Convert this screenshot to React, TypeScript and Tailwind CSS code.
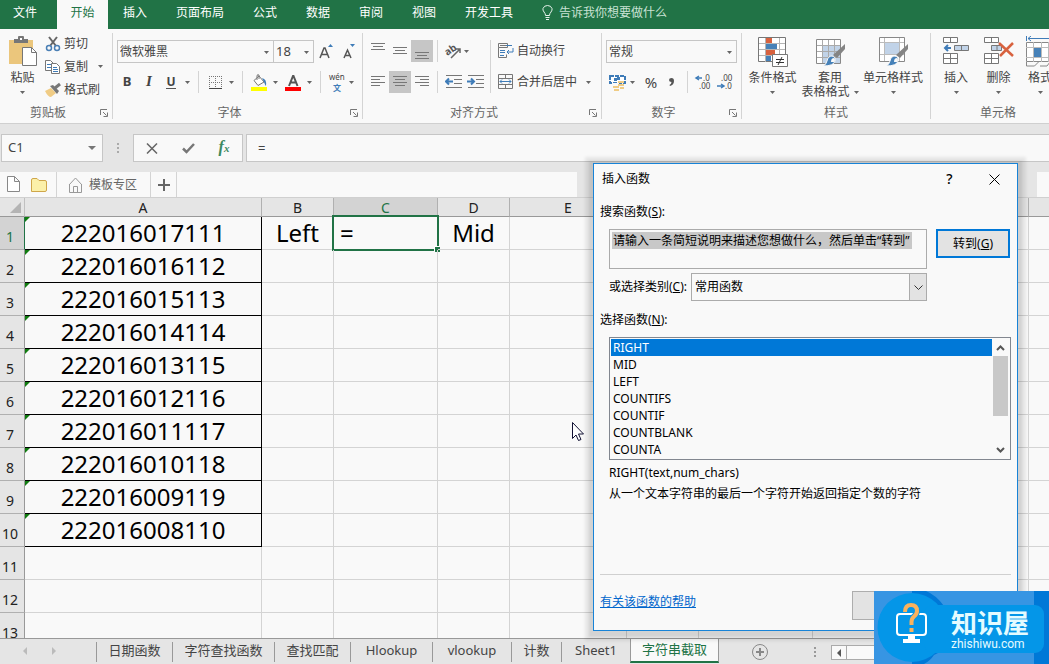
import type { ReactNode } from "react"
import clsx from "clsx"

const menuTabs = ["插入", "页面布局", "公式", "数据", "审阅", "视图", "开发工具"]

const columns = ["A", "B", "C", "D", "E", "F", "G", "H", "I"]

const values = [
  "222016017111",
  "222016016112",
  "222016015113",
  "222016014114",
  "222016013115",
  "222016012116",
  "222016011117",
  "222016010118",
  "222016009119",
  "222016008110",
]

const rows = Array.from({ length: 13 }, (_, i) => i + 1)

const sheets = [
  { name: "日期函数", width: "w-[76px]" },
  { name: "字符查找函数", width: "w-[102px]" },
  { name: "查找匹配", width: "w-[76px]" },
  { name: "Hlookup", width: "w-[82px]" },
  { name: "vlookup", width: "w-[79px]" },
  { name: "计数", width: "w-[50px]" },
  { name: "Sheet1", width: "w-[69px]" },
]

const functions = ["RIGHT", "MID", "LEFT", "COUNTIFS", "COUNTIF", "COUNTBLANK", "COUNTA"]

function Caret({ className }: { className?: string }) {
  return (
    <svg className={clsx("shrink-0", className)} width="5" height="3" viewBox="0 0 5 3" fill="#666">
      <path d="M0 0h5L2.5 3z" />
    </svg>
  )
}

function Separator({ className }: { className?: string }) {
  return <span className={clsx("w-px shrink-0 self-stretch bg-[#d4d4d4]", className)} />
}

function Group({
  label,
  launcher = true,
  className,
  children,
}: {
  label: string
  launcher?: boolean
  className?: string
  children: ReactNode
}) {
  return (
    <section
      aria-label={label}
      className={clsx("flex h-[86px] shrink-0 flex-col justify-between border-r border-[#d4d4d4]", className)}
    >
      {children}
      <div className="flex h-3 items-center">
        <span className="flex-1 text-center leading-3 text-[#666]">{label}</span>
        {launcher && (
          <button aria-label={`${label}设置`} className="mr-1 ml-1 h-2">
            <svg width="8" height="8" viewBox="0 0 8 8" fill="none" stroke="#777">
              <path d="M.5 6V.5H7M3 3l3.500 3.500M7.500 3.500v4h-4" />
            </svg>
          </button>
        )}
      </div>
    </section>
  )
}

function ToolButton({
  label,
  active,
  className = "w-[22px]",
  children,
}: {
  label: string
  active?: boolean
  className?: string
  children: ReactNode
}) {
  return (
    <button
      aria-label={label}
      className={clsx("flex h-[22px] shrink-0 items-center justify-center", className, active && "bg-[#c6c6c6]")}
    >
      {children}
    </button>
  )
}

function LargeButton({
  icon,
  label,
  label2,
  className,
}: {
  icon: ReactNode
  label: string
  label2?: string
  className?: string
}) {
  return (
    <button className={clsx("flex shrink-0 flex-col items-center whitespace-nowrap", className)}>
      <span className="mb-[2px] h-8">{icon}</span>
      <span className="leading-4">{label}</span>
      <span className="flex h-3 items-center gap-1">
        {label2}
        <Caret />
      </span>
    </button>
  )
}

// Paragraph lines; each entry is [x, width]
function LinesIcon({ lines, y = 0 }: { lines: number[][]; y?: number }) {
  return (
    <svg width="14" height="18" viewBox="0 0 14 18" fill="#777">
      {lines.map(([x, w], i) => (
        <rect key={i} x={x} y={y + i * 3} width={w} height="1" />
      ))}
    </svg>
  )
}

function SelectBox({ label, value, className }: { label: string; value: string; className?: string }) {
  return (
    <div className={clsx("relative h-[23px] border border-[#c6c6c6]", className)}>
      <select aria-label={label} className="block h-full w-full appearance-none pl-[2px] text-[#444] outline-none">
        <option>{value}</option>
      </select>
      <Caret className="pointer-events-none absolute top-[10px] right-1" />
    </div>
  )
}

function PasteIcon() {
  return (
    <svg width="30" height="32" viewBox="0 0 30 32">
      <path d="M1 4h24v24H1z" fill="#ebc67c" />
      <path d="M6 7V3h4V1q0-1 1-1h4q1 0 1 1v2h4v4z" fill="#777" />
      <path d="M12 2h2v2h-2z" fill="#fff" />
      <path d="M14.500 11.500h9l5 5v13h-14z" fill="#fff" stroke="#777" />
      <path d="M23.500 11.500v5h5" fill="none" stroke="#777" />
    </svg>
  )
}

function CutIcon() {
  return (
    <svg width="16" height="16" viewBox="0 0 16 16" fill="none">
      <path d="M4 1l7 9M12 1L5 10" stroke="#666" strokeWidth="2" />
      <circle cx="4" cy="12" r="2.500" stroke="#4a7fb5" strokeWidth="1.500" />
      <circle cx="12" cy="12" r="2.500" stroke="#4a7fb5" strokeWidth="1.500" />
    </svg>
  )
}

function CopyIcon() {
  return (
    <svg width="16" height="16" viewBox="0 0 16 16" fill="#fff" stroke="#777">
      <path d="M.5 1.500h5l3 3v7h-8z" />
      <path d="M2 5.500h4M2 8.500h4" stroke="#3f7cb8" />
      <path d="M6.500 4.500h5l3 3v7h-8z" />
      <path d="M8 8.500h4M8 10.500h5M8 12.500h5" stroke="#3f7cb8" />
    </svg>
  )
}

function PainterIcon() {
  return (
    <svg width="16" height="16" viewBox="0 0 16 16">
      <path d="M0 9l6-3 5 5-5 4q-3 0-6-6z" fill="#f0cc85" />
      <path d="M5 4l3-1 6 6-2 3z" fill="#777" />
      <path d="M10 6l5-4" stroke="#777" strokeWidth="3" />
    </svg>
  )
}

function BrushOverlay() {
  return (
    <>
      <path d="M30 8v5l-8 9-4-3z" fill="#848484" />
      <path d="M8 30q3-1 4-5 1-5 5-5 4 1 3 5-1 5-12 5z" fill="#4681b8" stroke="#f9f9f9" />
      <path d="M16 26q0-4 3-4 2 2 0 4z" fill="#f9f9f9" />
    </>
  )
}

function ConditionalIcon() {
  return (
    <svg width="30" height="32" viewBox="0 0 30 32">
      <path d="M.5 1.500h27v24H.5z" fill="#fff" stroke="#777" />
      <path d="M7.500 2v24M21.500 2v24M1 7.500h26M1 13.500h26M1 19.500h26" stroke="#b5b5b5" fill="none" />
      <path d="M8 2h6v5H8zM8 14h9v5H8z" fill="#d8623f" />
      <path d="M8 8h11v5H8zM8 20h5v5H8z" fill="#4681b8" />
      <path d="M14.500 18.500h15v12h-15z" fill="#fff" stroke="#777" />
      <path d="M18 23.500h8M18 26.500h8M24 21l-4 8" stroke="#333" />
    </svg>
  )
}

function TableFormatIcon() {
  return (
    <svg width="30" height="32" viewBox="0 0 30 32">
      <path d="M1.500 3.500h24v24h-24z" fill="#fff" />
      <path d="M7 9h18v18H7z" fill="#c1d3e8" />
      <path d="M7.500 3v24M13.500 3v24M19.500 3v24M1 9.500h25M1 15.500h25M1 21.500h25" stroke="#aaa" fill="none" />
      <path d="M1.500 3.500h24v24h-24z" fill="none" stroke="#888" />
      <BrushOverlay />
    </svg>
  )
}

function CellStyleIcon() {
  return (
    <svg width="30" height="32" viewBox="0 0 30 32">
      <path d="M1.500 1.500h25v24h-25z" fill="#fff" stroke="#888" />
      <path d="M6.500 2v23M21.500 2v23M2 6.500h24M2 18.500h24" stroke="#bbb" fill="none" />
      <path d="M7 7h14v11H7z" fill="#c1d3e8" />
      <BrushOverlay />
    </svg>
  )
}

function InsertCellsIcon() {
  return (
    <svg width="28" height="32" viewBox="0 0 28 32" fill="#fff" stroke="#777">
      <path d="M1.500 1.500h14v5h-14zM8.500 1.500v5" />
      <path d="M1.500 17.500h14v10h-14zM8.500 17.500v10M1.500 22.500h14" />
      <path d="M12.500 9.500h14v5h-14zM19.500 9.500v5" fill="#c1d3e8" />
      <path d="M9 12H3m3-3l-3 3 3 3" fill="none" stroke="#3f7cb8" strokeWidth="2" />
    </svg>
  )
}

function DeleteCellsIcon() {
  return (
    <svg width="30" height="32" viewBox="0 0 30 32" fill="#fff" stroke="#777">
      <path d="M.5 1.500h14v5H.5zM7.500 1.500v5" />
      <path d="M.5 17.500h14v10H.5zM7.500 17.500v10M.5 22.500h14" />
      <path d="M7.500 9.500h10v5h-10zM13 9.500v5" fill="#c1d3e8" />
      <path d="M15 7l14 13M29 7L16 20" stroke="#d8623f" strokeWidth="2.500" />
    </svg>
  )
}

function FormatCellsIcon() {
  return (
    <svg width="30" height="32" viewBox="0 0 30 32" fill="none" stroke="#888">
      <path d="M1.500 0v5M28.500 0v5M3 2.500h24M6 0L3 2.500 6 5M24 0l3 2.500L24 5" stroke="#3f7cb8" />
      <path d="M1.500 6.500h27v19h-27z" fill="#fff" />
      <path d="M8.500 6v20M16.500 6v20M23.500 6v20M1 11.500h28M1 21.500h28" stroke="#bbb" />
      <path d="M9 12h7v9H9z" fill="#4681b8" stroke="none" />
      <path d="M1.500 26v4h8l4-4M15 30h7l3-4" />
    </svg>
  )
}

function DecimalIcon({ increase }: { increase?: boolean }) {
  return (
    <svg className="overflow-visible" width="16" height="16" viewBox="0 0 16 16" fontSize="8" fill="#444">
      <text x={increase ? 8 : 4} y="7">
        {increase ? ".0" : ".00"}
      </text>
      <text x={increase ? 4 : 8} y="15">
        {increase ? ".00" : ".0"}
      </text>
      {increase ? (
        <path d="M7 4H1m3-2L1 4l3 2" fill="none" stroke="#3f7cb8" strokeWidth="1.500" />
      ) : (
        <path d="M0 12h6M4 10l3 2-3 2" fill="none" stroke="#3f7cb8" strokeWidth="1.500" />
      )}
    </svg>
  )
}

function IndentIcon({ right }: { right?: boolean }) {
  return (
    <svg width="17" height="14" viewBox="0 0 17 14" fill="none">
      <path d="M1 .5h16M9 4.500h8M9 8.500h8M1 12.500h16" stroke="#777" />
      <path
        d={right ? "M0 6.500h6M4 3.500l3 3-3 3" : "M8 6.500H2M4 3.500l-3 3 3 3"}
        stroke="#3f7cb8"
        strokeWidth="2"
      />
    </svg>
  )
}

function MenuBar() {
  return (
    <nav className="flex h-[29px] shrink-0 bg-[#217346] text-white">
      <button className="w-[57px] pr-[7px] pb-1">文件</button>
      <button className="w-[51px] bg-[#f9f9f9] pb-1 text-[#217346]">开始</button>
      <div className="flex gap-[29px] pl-[15px]">
        {menuTabs.map((tab) => (
          <button key={tab} className="pb-1">
            {tab}
          </button>
        ))}
      </div>
      <button className="ml-[29px] flex items-center gap-[6px] pb-1 text-[#c9e2d4]">
        <svg width="11" height="15" viewBox="0 0 11 15" fill="none" stroke="#e6f2eb">
          <path d="M3.500 10.500q0-2-1.500-3.500Q.5 5 1 3.500 2 .5 5.500.5T10 3.500Q10.500 5 9 7q-1.500 1.500-1.500 3.500zM3.500 12.500h4M4 14.500h3" />
        </svg>
        告诉我你想要做什么
      </button>
    </nav>
  )
}

function Ribbon() {
  return (
    <div className="flex h-[95px] shrink-0 overflow-hidden border-b border-[#d0d0d0] bg-[#f9f9f9] pt-1 text-[#444]">
      <Group label="剪贴板" className="w-[113px]">
        <div className="flex pt-[3px]">
          <LargeButton icon={<PasteIcon />} label="粘贴" className="w-[45px] pr-[2px] pl-[2px]" />
          <div className="flex flex-col">
            <button className="flex h-[23px] items-center gap-[3px] pb-2">
              <CutIcon />
              剪切
            </button>
            <button className="flex h-[23px] items-center gap-[3px] pb-2">
              <CopyIcon />
              复制
              <Caret className="ml-[7px]" />
            </button>
            <button className="flex h-[23px] items-center gap-[3px] pb-2">
              <PainterIcon />
              格式刷
            </button>
          </div>
        </div>
      </Group>

      <Group label="字体" className="w-[250px]">
        <div className="flex flex-col gap-2 pt-[7px] pl-1">
          <div className="flex">
            <SelectBox label="字体名称" value="微软雅黑" className="w-[157px]" />
            <SelectBox label="字号" value="18" className="-ml-px w-[41px] text-[13px]" />
            <ToolButton label="增大字号" className="w-6">
              <svg width="14" height="15" viewBox="0 0 14 15" fill="none">
                <path d="M1 14L5 4h1l4 10M2.500 10.500h6" stroke="#555" strokeWidth="1.500" />
                <path d="M9 3l2.500-3L14 3z" fill="#3f7cb8" />
              </svg>
            </ToolButton>
            <ToolButton label="减小字号">
              <svg width="13" height="15" viewBox="0 0 13 15" fill="none">
                <path d="M1 14l3.500-8L8 14M2 11.500h5" stroke="#555" strokeWidth="1.500" />
                <path d="M7 0h5L9.500 3z" fill="#3f7cb8" />
              </svg>
            </ToolButton>
          </div>
          <div className="flex items-center">
            <ToolButton label="加粗" className="w-5">
              <b className="text-[13px]">B</b>
            </ToolButton>
            <ToolButton label="倾斜" className="w-6">
              <i className="font-['Liberation_Serif',serif] text-[15px] font-bold">I</i>
            </ToolButton>
            <ToolButton label="下划线" className="w-5">
              <b className="border-b border-[#555] text-xs leading-3">U</b>
            </ToolButton>
            <Caret className="ml-1" />
            <Separator className="mx-2" />
            <ToolButton label="边框" className="w-4">
              <svg width="13" height="13" viewBox="0 0 13 13" fill="none" stroke="#777">
                <path d="M.5 0v12M6.500 0v12M12.500 0v12M0 .5h13M0 6.500h13" strokeDasharray="1 1" />
                <path d="M0 12.500h13" stroke="#444" />
              </svg>
            </ToolButton>
            <Caret className="ml-[6px]" />
            <Separator className="mx-2" />
            <ToolButton label="填充颜色" className="w-4">
              <svg width="16" height="17" viewBox="0 0 16 17" fill="none">
                <path d="M3 6.500L8 2l5 6-6 3.500zM6 6V2q0-2 2-1v4" stroke="#777" fill="#fff" />
                <path d="M11 4q5 1 4 8-1-1-2-4z" fill="#3f7cb8" />
                <path d="M0 13h16v4H0z" fill="#ff0" />
              </svg>
            </ToolButton>
            <Caret className="ml-[6px]" />
            <ToolButton label="字体颜色" className="ml-[7px] w-4">
              <svg width="16" height="17" viewBox="0 0 16 17" fill="none">
                <path d="M4 12l4-10h.500l4 10M5.500 8.500h6" stroke="#555" strokeWidth="2" />
                <path d="M0 13h16v4H0z" fill="#f00" />
              </svg>
            </ToolButton>
            <Caret className="ml-[6px]" />
            <Separator className="mx-2" />
            <button className="flex flex-col items-center text-[8px] leading-[11px]">
              wén
              <span className="font-bold text-[#3f7cb8]">文</span>
            </button>
            <Caret className="ml-1" />
          </div>
        </div>
      </Group>

      <Group label="对齐方式" className="w-[239px]">
        <div className="flex pt-[7px] pl-1">
          <div className="flex flex-col gap-[9px]">
            <div className="flex">
              <ToolButton label="顶端对齐">
                <LinesIcon y={1} lines={[[0, 14], [2, 10], [0, 14]]} />
              </ToolButton>
              <ToolButton label="垂直居中">
                <LinesIcon y={5} lines={[[0, 14], [2, 10], [0, 14]]} />
              </ToolButton>
              <ToolButton label="底端对齐" active>
                <LinesIcon y={10} lines={[[0, 14], [2, 10], [0, 14]]} />
              </ToolButton>
              <Separator className="mx-1" />
              <ToolButton label="方向">
                <svg className="overflow-visible" width="17" height="16" viewBox="0 0 17 16">
                  <text x="0" y="10" fontSize="10" fontWeight="700" fill="#555" transform="rotate(-35 6 8)">
                    ab
                  </text>
                  <path d="M6 15l9-9M11 6h4v4" fill="none" stroke="#666" strokeWidth="1.500" />
                </svg>
              </ToolButton>
              <Caret className="self-center" />
            </div>
            <div className="flex">
              <ToolButton label="左对齐">
                <LinesIcon y={3} lines={[[0, 14], [0, 9], [0, 14], [0, 9]]} />
              </ToolButton>
              <ToolButton label="居中" active>
                <LinesIcon y={3} lines={[[0, 14], [2, 10], [0, 14], [2, 10]]} />
              </ToolButton>
              <ToolButton label="右对齐">
                <LinesIcon y={3} lines={[[0, 14], [5, 9], [0, 14], [5, 9]]} />
              </ToolButton>
              <Separator className="mx-1" />
              <ToolButton label="减少缩进量">
                <IndentIcon />
              </ToolButton>
              <ToolButton label="增加缩进量">
                <IndentIcon right />
              </ToolButton>
            </div>
          </div>
          <Separator className="mr-[7px] ml-1" />
          <div className="flex flex-1 flex-col gap-[9px]">
            <button className="flex h-[22px] items-center gap-[3px]">
              <svg width="16" height="16" viewBox="0 0 16 16" fill="none" stroke="#777">
                <path d="M.5.5h9v4h-9zM.5 4.500v10h8v-3M2 2.500h12" />
                <path d="M2 7.500h5M2 9.500h5M2 12.500h4M8 2.500h6M15 5v4H9m2-2L9 9l2 2" stroke="#3f7cb8" />
              </svg>
              自动换行
            </button>
            <button className="flex h-[22px] items-center gap-[3px]">
              <svg width="16" height="16" viewBox="0 0 16 16" fill="none" stroke="#777">
                <path d="M.5.5h14v14H.5zM.5 4.500h14M.5 10.500h14M7.500.5v4M7.500 10.500v4" />
                <path d="M2 7.500h11M4 5.500l-2 2 2 2M11 5.500l2 2-2 2" stroke="#3f7cb8" />
              </svg>
              合并后居中
              <Caret className="ml-[6px]" />
            </button>
          </div>
        </div>
      </Group>

      <Group label="数字" className="w-[140px]">
        <div className="flex flex-col gap-2 px-1 pt-[7px]">
          <SelectBox label="数字格式" value="常规" className="w-full" />
          <div className="flex items-center">
            <ToolButton label="会计数字格式">
              <svg width="17" height="17" viewBox="0 0 17 17">
                <path d="M1 2h15v7H1z" fill="#fff" stroke="#3f7cb8" strokeWidth="2" strokeDasharray="4 1" />
                <path d="M5 4h3v3H5zM8 3h3v3H8z" fill="#3f7cb8" />
                <path d="M3 9h7v8H3z" fill="#f9f9f9" />
                <path d="M9 7h6v2H9zM9 10h6v2H9zM4 12h6v2H4zM5 15h5v2H5zM11 13h4v2h-4z" fill="#f0cc85" />
              </svg>
            </ToolButton>
            <Caret className="ml-[2px]" />
            <ToolButton label="百分比样式" className="ml-1 w-6">
              <span className="text-[15px]">%</span>
            </ToolButton>
            <ToolButton label="千位分隔样式" className="w-4">
              <svg width="5" height="8" viewBox="0 0 5 8" fill="#555">
                <path d="M0 2q0-2 2.500-2T5 3q0 4-4 5l-.5-1q2-1 2-3Q0 4 0 2z" />
              </svg>
            </ToolButton>
            <Separator className="mr-1 ml-2" />
            <ToolButton label="增加小数位数">
              <DecimalIcon increase />
            </ToolButton>
            <ToolButton label="减少小数位数">
              <DecimalIcon />
            </ToolButton>
          </div>
        </div>
      </Group>

      <Group label="样式" launcher={false} className="w-[189px]">
        <div className="flex pt-[3px]">
          <LargeButton icon={<ConditionalIcon />} label="条件格式" className="w-[61px]" />
          <LargeButton icon={<TableFormatIcon />} label="套用" label2="表格格式" className="w-[54px]" />
          <LargeButton icon={<CellStyleIcon />} label="单元格样式" className="w-[72px]" />
        </div>
      </Group>

      <Group label="单元格" launcher={false} className="w-[135px]">
        <div className="flex pt-[3px] pl-1">
          <LargeButton icon={<InsertCellsIcon />} label="插入" className="w-[42px]" />
          <LargeButton icon={<DeleteCellsIcon />} label="删除" className="w-[43px]" />
          <LargeButton icon={<FormatCellsIcon />} label="格式" className="w-[40px]" />
        </div>
      </Group>
    </div>
  )
}

function FormulaBar() {
  return (
    <div className="flex h-12 shrink-0 items-start bg-[#e5e5e5] pt-[10px] pl-px">
      <div className="flex h-7 w-[102px] items-center border border-[#c6c6c6] bg-[#f9f9f9] pr-[6px]">
        <input aria-label="名称框" defaultValue="C1" className="w-0 flex-1 pl-[6px] text-[13px] text-[#444] outline-none" />
        <svg width="8" height="4" viewBox="0 0 8 4" fill="#777">
          <path d="M0 0h8L4 4z" />
        </svg>
      </div>
      <div className="flex h-7 w-[30px] flex-col items-center justify-center gap-[2px]">
        <span className="size-[2px] bg-[#aaa]" />
        <span className="size-[2px] bg-[#aaa]" />
        <span className="size-[2px] bg-[#aaa]" />
      </div>
      <div className="flex h-7 w-[110px] border border-[#c6c6c6] bg-[#f9f9f9]">
        <button aria-label="取消" className="flex flex-1 items-center justify-center">
          <svg width="12" height="11" viewBox="0 0 12 11" stroke="#666" strokeWidth="1.500">
            <path d="M1 .5l10 10M11 .5L1 10.500" />
          </svg>
        </button>
        <button aria-label="输入" className="flex flex-1 items-center justify-center">
          <svg width="13" height="11" viewBox="0 0 13 11" stroke="#777" strokeWidth="2.500" fill="none">
            <path d="M1 5.500L4.500 9 12 1" />
          </svg>
        </button>
        <button className="flex-1 pb-[2px] font-['Liberation_Serif',serif] text-base leading-none font-bold text-[#3c8a60] italic">
          f<span className="text-[11px]">x</span>
        </button>
      </div>
      <input
        aria-label="编辑栏"
        defaultValue="="
        className="ml-[3px] h-7 w-0 flex-1 border border-r-0 border-[#c6c6c6] bg-[#f9f9f9] pl-[11px] text-[13px] text-[#444] outline-none"
      />
    </div>
  )
}

function TemplateBar() {
  return (
    <div className="flex h-[26px] shrink-0 justify-between border-b border-[#d0d0d0] bg-[#e5e5e5]">
      <div className="flex w-[55%] items-center bg-[#f9f9f9] pl-[6px] text-[#666]">
        <button aria-label="新建">
          <svg width="15" height="17" viewBox="0 0 15 17" fill="#fff" stroke="#888">
            <path d="M1.500.5h7l5 5v10h-12zM8.500.5v5h5" />
          </svg>
        </button>
        <button aria-label="打开" className="mr-2 ml-[9px]">
          <svg width="18" height="16" viewBox="0 0 18 16" fill="#fbf0a9" stroke="#cfa64a">
            <path d="M1.500 14.500V3Q1.500 1.500 3 1.500h4l2 2h6q1.500 0 1.500 1.500v8q0 1.500-1.500 1.500z" />
          </svg>
        </button>
        <Separator />
        <button className="flex items-center gap-[6px] pr-[13px] pl-[11px]">
          <svg width="15" height="16" viewBox="0 0 15 16" fill="none" stroke="#999">
            <path d="M1 8l6.500-7L14 8M1.500 7v8.500h12V7M5.500 15V9.500h4V15" />
          </svg>
          模板专区
        </button>
        <Separator />
        <button aria-label="新标签" className="flex w-[25px] justify-center">
          <svg width="12" height="12" viewBox="0 0 12 12" stroke="#666" strokeWidth="2">
            <path d="M6 0v12M0 6h12" />
          </svg>
        </button>
        <Separator />
      </div>
      <div className="w-3 bg-[#f9f9f9]" />
    </div>
  )
}

function Grid() {
  return (
    <table className="w-[110%] table-fixed border-separate border-spacing-0 text-black">
      <colgroup>
        <col className="w-[25px]" />
        <col className="w-[237px]" />
        <col className="w-[72px]" />
        <col className="w-[104px]" />
        <col className="w-[72px]" />
        <col className="w-[117px]" />
        <col className="w-[72px]" />
        <col className="w-[114px]" />
        <col className="w-[216px]" />
        <col />
      </colgroup>
      <thead>
        <tr className="h-[19px] bg-[#e5e5e5] text-sm leading-[17px]">
          <th className="border-r border-b border-r-[#c0c0c0] border-b-[#999] p-0">
            <svg className="mr-[3px] ml-auto" width="11" height="11" viewBox="0 0 11 11" fill="#b4b4b4">
              <path d="M11 0v11H0z" />
            </svg>
          </th>
          {columns.map((col) => (
            <th
              key={col}
              scope="col"
              className={clsx(
                "border-r border-b border-r-[#b0b0b0] border-b-[#999] p-0 pt-px font-normal",
                col === "C" ? "bg-[#d3d3d3] text-[#217346]" : "text-[#222]"
              )}
            >
              {col}
            </th>
          ))}
        </tr>
      </thead>
      <tbody>
        {rows.map((row) => (
          <tr key={row} className="h-[33px] text-2xl leading-8">
            <th
              scope="row"
              className={clsx(
                "border-r border-b border-b-[#b0b0b0] p-0 pt-2 pr-1 text-center text-sm leading-6 font-normal",
                row === 1
                  ? "border-r-[#217346] bg-[#d3d3d3] text-[#217346]"
                  : "border-r-[#999] bg-[#e5e5e5] text-[#222]"
              )}
            >
              {row}
            </th>
            {columns.map((col) => {
              const boxed = col === "A" && row <= values.length
              const selected = col === "C" && row === 1
              return (
                <td
                  key={col}
                  className={clsx(
                    "relative border-r border-b p-0 text-center",
                    boxed ? "border-black" : "border-[#d4d4d4]"
                  )}
                >
                  {boxed && (
                    <>
                      <span className="absolute top-0 left-0 size-[5px] bg-[#107c10] [clip-path:polygon(0_0,100%_0,0_100%)]" />
                      {values[row - 1]}
                    </>
                  )}
                  {row === 1 && col === "B" && "Left"}
                  {row === 1 && col === "D" && "Mid"}
                  {selected && (
                    <>
                      <span className="block pl-[6px] text-left">=</span>
                      <span className="absolute -inset-[2px] border-2 border-[#217346]" />
                      <span className="absolute -right-[3px] -bottom-[3px] size-[6px] border-t border-l border-white bg-[#217346]" />
                    </>
                  )}
                </td>
              )
            })}
          </tr>
        ))}
      </tbody>
    </table>
  )
}

function SheetTabs() {
  return (
    <div className="flex h-[26px] shrink-0 items-start border-t border-[#999] bg-[#e5e5e5] text-[13px] text-[#444]">
      <div className="flex h-6 w-24 items-center gap-[25px] pl-[23px]">
        <button aria-label="上一个工作表">
          <svg width="4" height="8" viewBox="0 0 4 8" fill="#bbb">
            <path d="M4 0v8L0 4z" />
          </svg>
        </button>
        <button aria-label="下一个工作表">
          <svg width="4" height="8" viewBox="0 0 4 8" fill="#bbb">
            <path d="M0 0v8l4-4z" />
          </svg>
        </button>
      </div>
      {sheets.map(({ name, width }) => (
        <button key={name} className={clsx("mt-[3px] h-5 border-l border-[#999] pb-1 leading-4", width)}>
          {name}
        </button>
      ))}
      <button className="h-6 w-[89px] border-x border-b-2 border-x-[#999] border-b-[#217346] bg-[#f9f9f9] text-[#217346]">
        字符串截取
      </button>
      <button aria-label="新建工作表" className="mt-1 ml-8">
        <svg width="18" height="18" viewBox="0 0 18 18" fill="none" stroke="#888">
          <circle cx="9" cy="9" r="7.500" />
          <path d="M9 5v8M5 9h8" strokeWidth="2" />
        </svg>
      </button>
      <div className="mt-2 ml-auto flex flex-col gap-[2px] pr-[15px]">
        <span className="size-[2px] bg-[#999]" />
        <span className="size-[2px] bg-[#999]" />
        <span className="size-[2px] bg-[#999]" />
      </div>
      <div className="mt-[6px] flex h-[15px] w-[218px] border border-[#aaa] bg-[#f9f9f9]">
        <button aria-label="向左滚动" className="flex w-[15px] items-center justify-center border-r border-[#aaa]">
          <svg width="4" height="8" viewBox="0 0 4 8" fill="#555">
            <path d="M4 0v8L0 4z" />
          </svg>
        </button>
      </div>
    </div>
  )
}

function FunctionDialog() {
  return (
    <div
      role="dialog"
      aria-label="插入函数"
      className="absolute top-[163px] left-[593px] flex h-[468px] w-[425px] flex-col border border-[#1883d7] bg-[#f9f9f9] px-[6px] text-black shadow-[0_2px_2px_4px_rgba(0,0,0,0.08),0_2px_3px_8px_rgba(0,0,0,0.08)]"
    >
      <div className="-mr-[6px] flex h-[30px] items-center pl-[2px]">
        <h2 className="flex-1">插入函数</h2>
        <button aria-label="帮助" className="w-[45px] text-sm font-medium">
          ?
        </button>
        <button aria-label="关闭" className="flex w-[45px] justify-center">
          <svg width="11" height="11" viewBox="0 0 11 11" stroke="#000">
            <path d="M.5.5l10 10M10.500.5l-10 10" />
          </svg>
        </button>
      </div>

      <label htmlFor="search" className="mt-[10px] leading-4">
        搜索函数(<u>S</u>):
      </label>
      <div className="mt-[9px] flex items-start justify-between pr-px pl-[9px]">
        <div className="h-10 w-[318px] border border-[#ababab] p-[2px]">
          <textarea
            id="search"
            rows={1}
            defaultValue="请输入一条简短说明来描述您想做什么，然后单击“转到”"
            className="block h-[17px] w-[300px] resize-none overflow-hidden bg-[#c8c8c8] pl-px leading-[17px] whitespace-nowrap outline-none"
          />
        </div>
        <button className="h-[29px] w-[74px] border-2 border-[#0078d7] bg-[#e3e3e3]">
          转到(<u>G</u>)
        </button>
      </div>

      <div className="mt-1 flex items-center pl-[9px]">
        <label htmlFor="category" className="w-[82px]">
          或选择类别(<u>C</u>):
        </label>
        <div className="relative h-7 w-[236px]">
          <select
            id="category"
            className="h-full w-full appearance-none border border-[#ababab] pl-[3px] outline-none"
          >
            <option>常用函数</option>
          </select>
          <span className="pointer-events-none absolute inset-y-0 right-0 flex w-[18px] items-center justify-center border border-[#ababab] bg-[#e3e3e3]">
            <svg width="9" height="5" viewBox="0 0 9 5" fill="none" stroke="#333">
              <path d="M.5.5l4 4 4-4" />
            </svg>
          </span>
        </div>
      </div>

      <span id="pick" className="mt-[11px] leading-4">
        选择函数(<u>N</u>):
      </span>
      <div className="mt-[9px] ml-[9px] flex h-[123px] border border-[#828790] p-px">
        <ul role="listbox" aria-labelledby="pick" className="flex-1">
          {functions.map((name, i) => (
            <li
              key={name}
              role="option"
              aria-selected={i === 0}
              className={clsx("h-[17px] pl-[2px] leading-[17px]", i === 0 && "bg-[#0078d7] text-white")}
            >
              {name}
            </li>
          ))}
        </ul>
        <div className="flex w-[17px] flex-col items-center pr-px pl-px">
          <button aria-label="向上" className="flex h-[17px] items-center">
            <svg width="9" height="6" viewBox="0 0 9 6" fill="none" stroke="#555" strokeWidth="2">
              <path d="M1 5l3.500-3.500L8 5" />
            </svg>
          </button>
          <div className="h-[60px] w-full bg-[#c8c8c8]" />
          <button aria-label="向下" className="mt-auto flex h-[17px] items-center">
            <svg width="9" height="6" viewBox="0 0 9 6" fill="none" stroke="#555" strokeWidth="2">
              <path d="M1 1l3.500 3.500L8 1" />
            </svg>
          </button>
        </div>
      </div>
      <p className="mt-1 pl-[9px] leading-[18px]">RIGHT(text,num_chars)</p>
      <p className="mt-1 pl-[9px] leading-4">从一个文本字符串的最后一个字符开始返回指定个数的字符</p>

      <div className="mt-auto flex h-[56px] items-start justify-between border-t border-[#d0d0d0] pt-4">
        <a href="#help" className="mt-[3px] leading-4 text-[#0066cc] underline">
          有关该函数的帮助
        </a>
        <button aria-label="确定" className="mr-[85px] h-[29px] w-[74px] border border-[#adadad] bg-[#e3e3e3]" />
      </div>
    </div>
  )
}

function Watermark() {
  return (
    <div className="absolute right-0 bottom-0 flex h-[73px] w-[175px] items-center bg-[#3795e3]">
      <svg className="absolute inset-0" width="175" height="73" viewBox="0 0 175 73">
        <path d="M160 0h15v73h-15z" fill="#0078d7" />
        <path d="M38 0h14q10 4 18 15l-4 46-6 3q-4 6-10 9H38z" fill="#0078d7" />
        <circle cx="38" cy="36.500" r="34.500" fill="#0496e8" />
        <rect x="50" y="14" width="120" height="48" rx="9" fill="#0496e8" />
        <rect x="23" y="23" width="29" height="21" rx="3" fill="none" stroke="#fff" strokeWidth="2" />
        <path d="M34 44h7v4h5v4H29v-4h5z" fill="#fff" />
        <path
          d="M31 20q0-6 6-6 6 0 6 6 0 3-3 5.500-2.500 2-2.500 5.500v3"
          fill="none"
          stroke="#0496e8"
          strokeWidth="6"
        />
        <path
          d="M31 21q0-7 6-7 6 0 6 6 0 3-3 5.500-2.500 2-2.500 5.500v3M37.500 37v4"
          fill="none"
          stroke="#f9b25e"
          strokeWidth="4"
        />
      </svg>
      <div className="relative pt-[4px] pl-[77px] text-[#e4fbff]">
        <p className="text-[26px] leading-7 font-bold">知识屋</p>
        <p className="font-[Roboto,sans-serif] text-xs leading-[14px]">zhishiwu.com</p>
      </div>
    </div>
  )
}

export default function App() {
  return (
    <div className="relative flex h-screen flex-col overflow-hidden bg-[#f9f9f9] font-['Noto_Sans','Noto_Sans_CJK_SC',sans-serif] text-xs">
      <MenuBar />
      <Ribbon />
      <FormulaBar />
      <TemplateBar />
      <main className="min-h-0 flex-1 overflow-hidden">
        <Grid />
      </main>
      <SheetTabs />
      <FunctionDialog />
      <Watermark />

      {/* Mouse pointer */}
      <svg className="absolute top-[422px] left-[572px]" width="12" height="19" viewBox="0 0 12 19">
        <path d="M.5.5v16l3.500-3.500 2.500 5.500 2.500-1-2.500-5.500h5z" fill="#fff" stroke="#113" />
      </svg>
    </div>
  )
}
